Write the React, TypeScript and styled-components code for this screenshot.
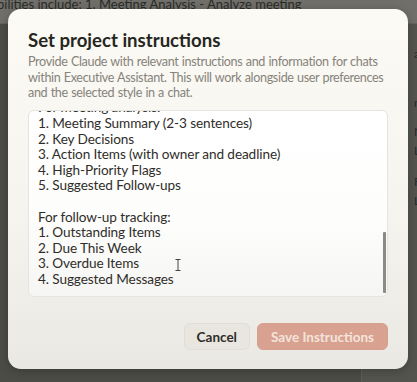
import React from "react";
import styled, { createGlobalStyle } from "styled-components";

const GlobalStyle = createGlobalStyle`
  html, body {
    margin: 0;
    padding: 0;
    background: #4c4c47;
    overflow: hidden;
  }
  * { box-sizing: border-box; }
`;

const Backdrop = styled.div`
  width: 417px;
  height: 382px;
  position: relative;
  background: #4c4c47;
  font-family: "Lato", "Liberation Sans", sans-serif;
  color: #262622;
  overflow: hidden;
`;

const BackTopLine = styled.div`
  height: 24px;
  background: #706f6a;
  font-size: 13px;
  line-height: 10px;
  white-space: nowrap;
  display: flex;
  border-bottom: 1px solid #64635e;
`;

const BackText = styled.span`
  margin-left: -3px;
  margin-top: -1px;
  color: #2b2b28;
`;

const BackSide = styled.div`
  display: flex;
  justify-content: flex-end;
`;

const BackPanel = styled.div`
  width: 56px;
  height: 358px;
  background: #54544f;
  border-left: 1px solid #5f5f5a;
  padding: 22px 0 0 52px;
  font-size: 12px;
  color: #2a2a27;
  display: flex;
  flex-direction: column;
  gap: 4px;
`;

const Modal = styled.div`
  position: absolute;
  left: 8px;
  top: 9px;
  width: 400px;
  height: 360px;
  border-radius: 13px;
  background: linear-gradient(180deg, #fcfaf4 0%, #f6f4ee 55%, #e9e8e3 100%);
  box-shadow: 0 2px 10px rgba(0, 0, 0, 0.25);
  padding: 19px 20px 19px 20px;
  display: flex;
  flex-direction: column;
`;

const Title = styled.h2`
  margin: 0;
  font-size: 18.6px;
  font-weight: 700;
  line-height: 24px;
  color: #262621;
`;

const Description = styled.p`
  margin: 2px 0 0 0;
  font-size: 12.6px;
  letter-spacing: -0.35px;
  word-spacing: 0.5px;
  line-height: 15.5px;
  color: #86837c;
`;

const Editor = styled.div`
  position: relative;
  margin-top: 9px;
  height: 187px;
  flex: none;
  border: 1px solid #e6e4de;
  border-radius: 6px;
  background: linear-gradient(180deg, #ffffff 0%, #fdfdfc 60%, #f5f5f3 100%);
  padding: 0 10px 8px 9px;
  overflow: hidden;
  display: flex;
  flex-direction: column;
  justify-content: flex-end;
`;

const Line = styled.div`
  flex: none;
  font-size: 13.6px;
  letter-spacing: -0.1px;
  line-height: 15.6px;
  color: #2f2e2a;
  white-space: pre;
  min-height: 15.6px;
`;

const Thumb = styled.div`
  position: absolute;
  right: 1px;
  bottom: 3px;
  width: 3px;
  height: 61px;
  background: #8b8a86;
  border-radius: 1px;
`;

const Cursor = styled.svg`
  position: absolute;
  left: 146px;
  top: 148px;
`;

const Footer = styled.div`
  margin-top: auto;
  display: flex;
  justify-content: flex-end;
  gap: 7px;
`;

const Button = styled.button<{ $primary?: boolean }>`
  height: 27px;
  border-radius: 6px;
  font-family: inherit;
  font-size: 13.5px;
  font-weight: 700;
  padding: 0 ${(p) => (p.$primary ? "13px" : "12px")};
  border: 1px solid ${(p) => (p.$primary ? "#d6a08f" : "#e0ded7")};
  background: ${(p) => (p.$primary ? "#d8a190" : "#e8e6df")};
  color: ${(p) => (p.$primary ? "#f4e4dc" : "#2e2d29")};
`;

const lines = [
  "Capabilities include:",
  "",
  "For meeting analysis:",
  "1. Meeting Summary (2-3 sentences)",
  "2. Key Decisions",
  "3. Action Items (with owner and deadline)",
  "4. High-Priority Flags",
  "5. Suggested Follow-ups",
  "",
  "For follow-up tracking:",
  "1. Outstanding Items",
  "2. Due This Week",
  "3. Overdue Items",
  "4. Suggested Messages",
];

export default function App() {
  return (
    <>
      <GlobalStyle />
      <Backdrop>
        <BackTopLine>
          <BackText>bilities include: 1. Meeting Analysis - Analyze meeting</BackText>
        </BackTopLine>
        <BackSide>
          <BackPanel>
            <span>ar</span>
            <span style={{ marginTop: 30 }}>no</span>
            <span style={{ marginTop: 10 }}>N</span>
            <span>L</span>
            <span style={{ marginTop: 12 }}>F</span>
            <span>L</span>
          </BackPanel>
        </BackSide>
        <Modal>
          <Title>Set project instructions</Title>
          <Description>
            Provide Claude with relevant instructions and information for chats
            within Executive Assistant. This will work alongside user preferences
            and the selected style in a chat.
          </Description>
          <Editor>
            {lines.map((l, i) => (
              <Line key={i}>{l}</Line>
            ))}
            <Thumb />
            <Cursor width="6" height="12" viewBox="0 0 6 12">
              <path d="M0.5 0.5h5M3 0.5v11M0.5 11.5h5" stroke="#444" strokeWidth="1" fill="none" />
            </Cursor>
          </Editor>
          <Footer>
            <Button>Cancel</Button>
            <Button $primary disabled>
              Save Instructions
            </Button>
          </Footer>
        </Modal>
      </Backdrop>
    </>
  );
}
